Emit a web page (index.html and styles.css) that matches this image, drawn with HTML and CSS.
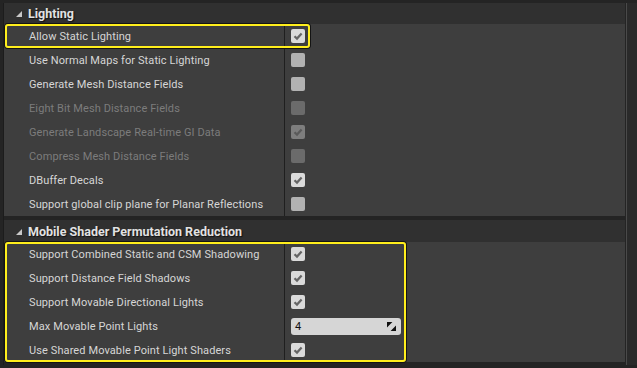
FILE: index.html
```html
<!DOCTYPE html>
<html lang="en">
<head>
    <meta charset="UTF-8">
    <title>Project Settings - Rendering</title>
    <link rel="stylesheet" href="styles.css">
</head>
<body>
    <div class="details">
        <div class="panel">
            <div class="section">
                <div class="section-header"><span class="arrow"></span>Lighting</div>
                <div class="section-body">
                    <div class="row">
                        <div class="name">Allow Static Lighting</div>
                        <div class="value"><span class="check on"><svg viewBox="0 0 14 14"><path d="M3.5 7.2 L6 9.6 L10.6 4.6" /></svg></span></div>
                    </div>
                    <div class="row">
                        <div class="name">Use Normal Maps for Static Lighting</div>
                        <div class="value"><span class="check"></span></div>
                    </div>
                    <div class="row">
                        <div class="name">Generate Mesh Distance Fields</div>
                        <div class="value"><span class="check"></span></div>
                    </div>
                    <div class="row disabled">
                        <div class="name">Eight Bit Mesh Distance Fields</div>
                        <div class="value"><span class="check"></span></div>
                    </div>
                    <div class="row disabled">
                        <div class="name">Generate Landscape Real-time GI Data</div>
                        <div class="value"><span class="check on"><svg viewBox="0 0 14 14"><path d="M3.5 7.2 L6 9.6 L10.6 4.6" /></svg></span></div>
                    </div>
                    <div class="row disabled">
                        <div class="name">Compress Mesh Distance Fields</div>
                        <div class="value"><span class="check"></span></div>
                    </div>
                    <div class="row">
                        <div class="name">DBuffer Decals</div>
                        <div class="value"><span class="check on"><svg viewBox="0 0 14 14"><path d="M3.5 7.2 L6 9.6 L10.6 4.6" /></svg></span></div>
                    </div>
                    <div class="row">
                        <div class="name">Support global clip plane for Planar Reflections</div>
                        <div class="value"><span class="check"></span></div>
                    </div>
                    <div class="highlight small"></div>
                </div>
            </div>

            <div class="section">
                <div class="section-header"><span class="arrow"></span>Mobile Shader Permutation Reduction</div>
                <div class="section-body">
                    <div class="row">
                        <div class="name">Support Combined Static and CSM Shadowing</div>
                        <div class="value"><span class="check on"><svg viewBox="0 0 14 14"><path d="M3.5 7.2 L6 9.6 L10.6 4.6" /></svg></span></div>
                    </div>
                    <div class="row">
                        <div class="name">Support Distance Field Shadows</div>
                        <div class="value"><span class="check on"><svg viewBox="0 0 14 14"><path d="M3.5 7.2 L6 9.6 L10.6 4.6" /></svg></span></div>
                    </div>
                    <div class="row">
                        <div class="name">Support Movable Directional Lights</div>
                        <div class="value"><span class="check on"><svg viewBox="0 0 14 14"><path d="M3.5 7.2 L6 9.6 L10.6 4.6" /></svg></span></div>
                    </div>
                    <div class="row">
                        <div class="name">Max Movable Point Lights</div>
                        <div class="value">
                            <div class="spin">
                                <span>4</span>
                                <svg class="grip" viewBox="0 0 10 10"><path d="M0 0 H6 L0 6 Z M10 10 H4 L10 4 Z" /></svg>
                            </div>
                        </div>
                    </div>
                    <div class="row">
                        <div class="name">Use Shared Movable Point Light Shaders</div>
                        <div class="value"><span class="check on"><svg viewBox="0 0 14 14"><path d="M3.5 7.2 L6 9.6 L10.6 4.6" /></svg></span></div>
                    </div>
                    <div class="highlight large"></div>
                </div>
            </div>
        </div>
        <div class="scrollbar"></div>
    </div>
</body>
</html>
```

FILE: styles.css
```css
body {
    margin: 0;
    background-color: #242424;
    font-family: Roboto, "Liberation Sans", sans-serif;
    height: 368px;
    overflow: hidden;
}
.details {
    display: flex;
    padding: 3px 0 0 3px;
    height: 365px;
    box-sizing: border-box;
}
.panel {
    flex: 1;
    display: flex;
    flex-direction: column;
    gap: 4px;
    border-left: 1px solid #1c1c1c;
}
.scrollbar {
    width: 10px;
    margin-left: 1px;
    background-color: #2a2a2a;
    border-left: 1px solid #4a4a4a;
}
.section-header {
    height: 21px;
    background-color: #303030;
    color: #e2e2e2;
    font-size: 12.5px;
    font-weight: bold;
    display: flex;
    align-items: center;
    padding-left: 12px;
    text-shadow: 1px 1px 1px #111;
}
.section + .section .section-header {
    height: 22px;
}
.arrow {
    width: 0;
    height: 0;
    border-left: 6px solid transparent;
    border-bottom: 6px solid #c8c8c8;
    margin-right: 6px;
    margin-top: 1px;
}
.section-body {
    position: relative;
    background-color: #3e3e3e;
}
.row {
    display: flex;
    height: 24px;
    color: #d6d6d6;
    font-size: 11px;
    letter-spacing: 0.1px;
}
.row .name {
    width: 255px;
    padding-left: 25px;
    display: flex;
    align-items: center;
    border-right: 1px solid #1f1f1f;
}
.row.disabled {
    color: #7c7c7c;
}
.row .value {
    flex: 1;
    display: flex;
    align-items: center;
    padding-left: 6px;
}
.check {
    width: 14px;
    height: 14px;
    border-radius: 2px;
    background-color: #b2b2b2;
    display: block;
}
.check.on {
    background-color: #dadada;
}
.check svg {
    width: 14px;
    height: 14px;
    display: block;
}
.check svg path {
    fill: none;
    stroke: #656565;
    stroke-width: 2.2;
}
.disabled .check {
    background-color: #6b6b6b;
}
.disabled .check.on {
    background-color: #7e7e7e;
}
.disabled .check svg path {
    stroke: #5a5a5a;
}
.spin {
    width: 110px;
    height: 17px;
    background-color: #d6d6d6;
    border-radius: 3px;
    display: flex;
    align-items: center;
    justify-content: space-between;
    padding: 0 5px 0 4px;
    box-sizing: border-box;
    color: #111;
    font-size: 11px;
}
.grip {
    width: 9px;
    height: 9px;
}
.grip path {
    fill: #111;
}
.highlight {
    position: absolute;
    left: 1px;
    top: 0;
    border: 2px solid #ffee1c;
    border-radius: 3px;
    box-shadow: 0 0 0 1px #141414;
    box-sizing: border-box;
}
.highlight.small {
    width: 305px;
    height: 24px;
}
.highlight.large {
    width: 401px;
    height: 120px;
}
```
